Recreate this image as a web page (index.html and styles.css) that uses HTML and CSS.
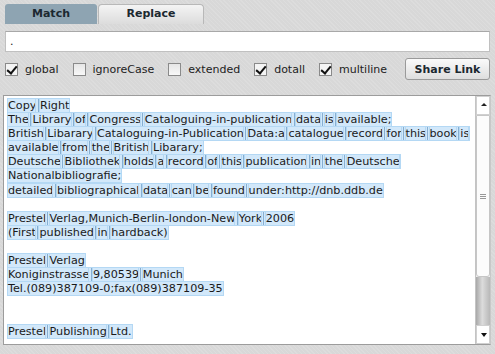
FILE: index.html
```html
<!DOCTYPE html>
<html lang="en">

<head>
  <meta charset="UTF-8">
  <title>Regex Tester</title>
  <link rel="stylesheet" href="styles.css">
</head>

<body>
  <div class="app">
    <div class="tabs">
      <div class="tab active">Match</div>
      <div class="tab">Replace</div>
    </div>

    <input type="text" class="regex" value=".">

    <div class="opts">
      <label class="opt"><span class="box checked"></span>global</label>
      <label class="opt"><span class="box"></span>ignoreCase</label>
      <label class="opt"><span class="box"></span>extended</label>
      <label class="opt"><span class="box checked"></span>dotall</label>
      <label class="opt"><span class="box checked"></span>multiline</label>
      <button class="share">Share Link</button>
    </div>

    <div class="output">
      <div class="text" id="text"></div>
      <div class="scroll">
        <div class="arrow up"></div>
        <div class="thumb"><span class="grip"></span></div>
        <div class="track"></div>
        <div class="arrow down"></div>
      </div>
    </div>
  </div>

  <script>
    const lines = [
      'Copy Right',
      'The Library of Congress Cataloguing-in-publication data is available;',
      'British Libarary Cataloguing-in-Publication Data:a catalogue record for this book is available from the British Libarary;',
      'Deutsche Bibliothek holds a record of this publication in the Deutsche Nationalbibliografie;',
      'detailed bibliographical data can be found under:http://dnb.ddb.de',
      '',
      'Prestel Verlag,Munich-Berlin-london-New York 2006',
      '(First published in hardback)',
      '',
      'Prestel Verlag',
      'Koniginstrasse 9,80539 Munich',
      'Tel.(089)387109-0;fax(089)387109-35',
      '',
      '',
      'Prestel Publishing Ltd.'
    ];

    // wrap every word of the sample text as a match
    const text = document.getElementById('text');
    lines.forEach(line => {
      const row = document.createElement('div');
      row.className = 'line';
      line.split(' ').forEach((word, i) => {
        if (!word) return;
        if (i > 0) {
          const sp = document.createElement('span');
          sp.className = 'm s';
          sp.textContent = ' ';
          row.appendChild(sp);
        }
        const m = document.createElement('span');
        m.className = 'm';
        m.textContent = word;
        row.appendChild(m);
      });
      text.appendChild(row);
    });
  </script>
</body>

</html>
```

FILE: styles.css
```css
body {
  margin: 0;
  background-color: #d8d8d8;
  font-family: "DejaVu Sans", Verdana, sans-serif;
  color: #1a1a1a;
}

.app {
  width: 495px;
  height: 354px;
  padding: 4px 4px 0 4px;
  box-sizing: border-box;
  background-color: #d8d8d8;
  background-image: repeating-linear-gradient(45deg, rgba(255, 255, 255, 0.12) 0 1px, transparent 1px 3px);
}

.tabs {
  display: flex;
  margin-left: 1px;
  height: 20px;
}

.tab {
  font-size: 11px;
  font-weight: bold;
  color: #1c2830;
  text-align: center;
  line-height: 20px;
  box-sizing: border-box;
}

.tab.active {
  width: 92px;
  background-color: #8ea4b2;
  border-radius: 3px 3px 0 0;
}

.tab:not(.active) {
  width: 106px;
  margin-left: 1px;
  background: linear-gradient(#f4f4f4, #dcdcdc);
  border: 1px solid #b8b8b8;
  border-bottom: none;
  border-radius: 4px 4px 0 0;
  line-height: 18px;
}

.regex {
  display: block;
  margin: 7px 0 0 1px;
  width: 485px;
  height: 21px;
  box-sizing: border-box;
  border: 1px solid #c0c0c0;
  border-top-color: #a8a8a8;
  background: #fff;
  padding: 0 4px;
  font-family: "DejaVu Sans", Verdana, sans-serif;
  font-size: 11px;
  color: #222;
  outline: none;
}

.opts {
  display: flex;
  align-items: center;
  height: 22px;
  margin: 6px 0 0 1px;
  width: 485px;
}

.opt {
  display: flex;
  align-items: center;
  font-size: 11px;
  color: #222;
  margin-right: 14px;
}

.box {
  width: 13px;
  height: 13px;
  box-sizing: border-box;
  border: 1px solid #8a8a8a;
  background: linear-gradient(#e6e6e6, #f8f8f8);
  margin-right: 7px;
  position: relative;
}

.box.checked {
  background: #f4f4f4;
}

.box.checked::after {
  content: "";
  position: absolute;
  left: 3px;
  top: 0px;
  width: 4px;
  height: 8px;
  border: solid #111;
  border-width: 0 2px 2px 0;
  transform: rotate(40deg);
}

.share {
  margin-left: auto;
  width: 85px;
  height: 22px;
  border: 1px solid #9a9a9a;
  border-radius: 3px;
  background: linear-gradient(#fafafa, #dedede);
  font-family: "DejaVu Sans", Verdana, sans-serif;
  font-size: 11px;
  font-weight: bold;
  color: #1c2830;
  padding: 0;
}

.output {
  display: flex;
  margin: 15px 0 0 -1px;
  width: 488px;
  height: 250px;
  box-sizing: border-box;
  border: 1px solid #9c9c9c;
  border-right-color: #c8c8c8;
  background: #fff;
}

.text {
  flex: 1;
  padding: 3px 4px 0 4px;
  font-size: 11.2px;
  line-height: 14.1px;
  color: #1a1a1a;
  overflow: hidden;
}

.line {
  min-height: 14.1px;
}

.m {
  background: #d2e8fa;
  box-shadow: 0 0 0 1px #b4d8f4;
}

.m.s {
  background: linear-gradient(#86afd2, #86afd2) center / 1px 100% no-repeat, #d2e8fa;
}

.scroll {
  width: 14px;
  display: flex;
  flex-direction: column;
  border-left: 1px solid #c4c4c4;
  background: #f0f0f0;
}

.arrow {
  height: 17px;
  background: #fff;
  border: 1px solid #d0d0d0;
  position: relative;
}

.arrow::after {
  content: "";
  position: absolute;
  left: 4px;
  width: 0;
  height: 0;
  border-left: 3px solid transparent;
  border-right: 3px solid transparent;
}

.up::after {
  top: 6px;
  border-bottom: 3px solid #222;
}

.down::after {
  top: 7px;
  border-top: 4px solid #111;
}

.thumb {
  height: 160px;
  background: #fcfcfc;
  border: 1px solid #c6c6c6;
  border-radius: 0 0 3px 3px;
  display: flex;
  align-items: center;
  justify-content: center;
}

.grip {
  width: 6px;
  height: 5px;
  background: repeating-linear-gradient(#999 0 1px, transparent 1px 2px);
}

.track {
  flex: 1;
  background: linear-gradient(to right, #a8a8a8, #dcdcdc 45%, #b8b8b8);
}
```
